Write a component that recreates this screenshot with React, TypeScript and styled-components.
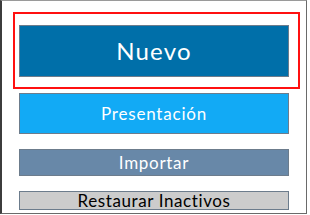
import * as React from "react";
import styled, { createGlobalStyle } from "styled-components";

const GlobalStyle = createGlobalStyle`
	html, body {
		margin: 0;
		padding: 0;
		background: #fff;
	}
	body {
		font-family: "Century Gothic", Lato, "Liberation Sans", sans-serif;
	}
`;

const Frame = styled.div`
	box-sizing: border-box;
	width: 307px;
	height: 214px;
	border-top: 1px solid #9a9a9a;
	border-left: 2px solid #3c3c3c;
	border-right: 1px solid #6a6a6a;
	border-bottom: 1px solid #6a6a6a;
	background: #fff;
	padding: 11px 0 0 11px;
`;

const Focus = styled.div`
	box-sizing: border-box;
	width: 287px;
	height: 77px;
	border: 2px solid #ff1010;
	padding: 11px 0 0 4px;
`;

const List = styled.div`
	display: flex;
	flex-direction: column;
	padding-left: 6px;
`;

type Variant = "main" | "present" | "import" | "restore";

const looks: Record<
	Variant,
	{ bg: string; fg: string; h: number; size: number; mt: number; ls: number }
> = {
	main: { bg: "#006fa9", fg: "#fff", h: 52, size: 24, mt: 0, ls: 1.2 },
	present: { bg: "#12aaf5", fg: "#fff", h: 41, size: 17, mt: 4, ls: 0.8 },
	import: { bg: "#6888a8", fg: "#fff", h: 27, size: 17, mt: 15, ls: 0.7 },
	restore: { bg: "#cccccc", fg: "#000", h: 19, size: 17, mt: 15, ls: 0.6 },
};

const Button = styled.button<{ $v: Variant }>`
	box-sizing: border-box;
	width: 270px;
	height: ${(p) => looks[p.$v].h}px;
	margin-top: ${(p) => looks[p.$v].mt}px;
	background: ${(p) => looks[p.$v].bg};
	color: ${(p) => looks[p.$v].fg};
	font-family: inherit;
	font-size: ${(p) => looks[p.$v].size}px;
	letter-spacing: ${(p) => looks[p.$v].ls}px;
	line-height: 1;
	border: 1px solid #6c7c8c;
	padding: 0;
	display: flex;
	align-items: center;
	justify-content: center;
	cursor: pointer;
`;

export default function App() {
	return (
		<>
			<GlobalStyle />
			<Frame>
				<Focus>
					<Button $v="main">Nuevo</Button>
				</Focus>
				<List>
					<Button $v="present">Presentación</Button>
					<Button $v="import">Importar</Button>
					<Button $v="restore">Restaurar Inactivos</Button>
				</List>
			</Frame>
		</>
	);
}
